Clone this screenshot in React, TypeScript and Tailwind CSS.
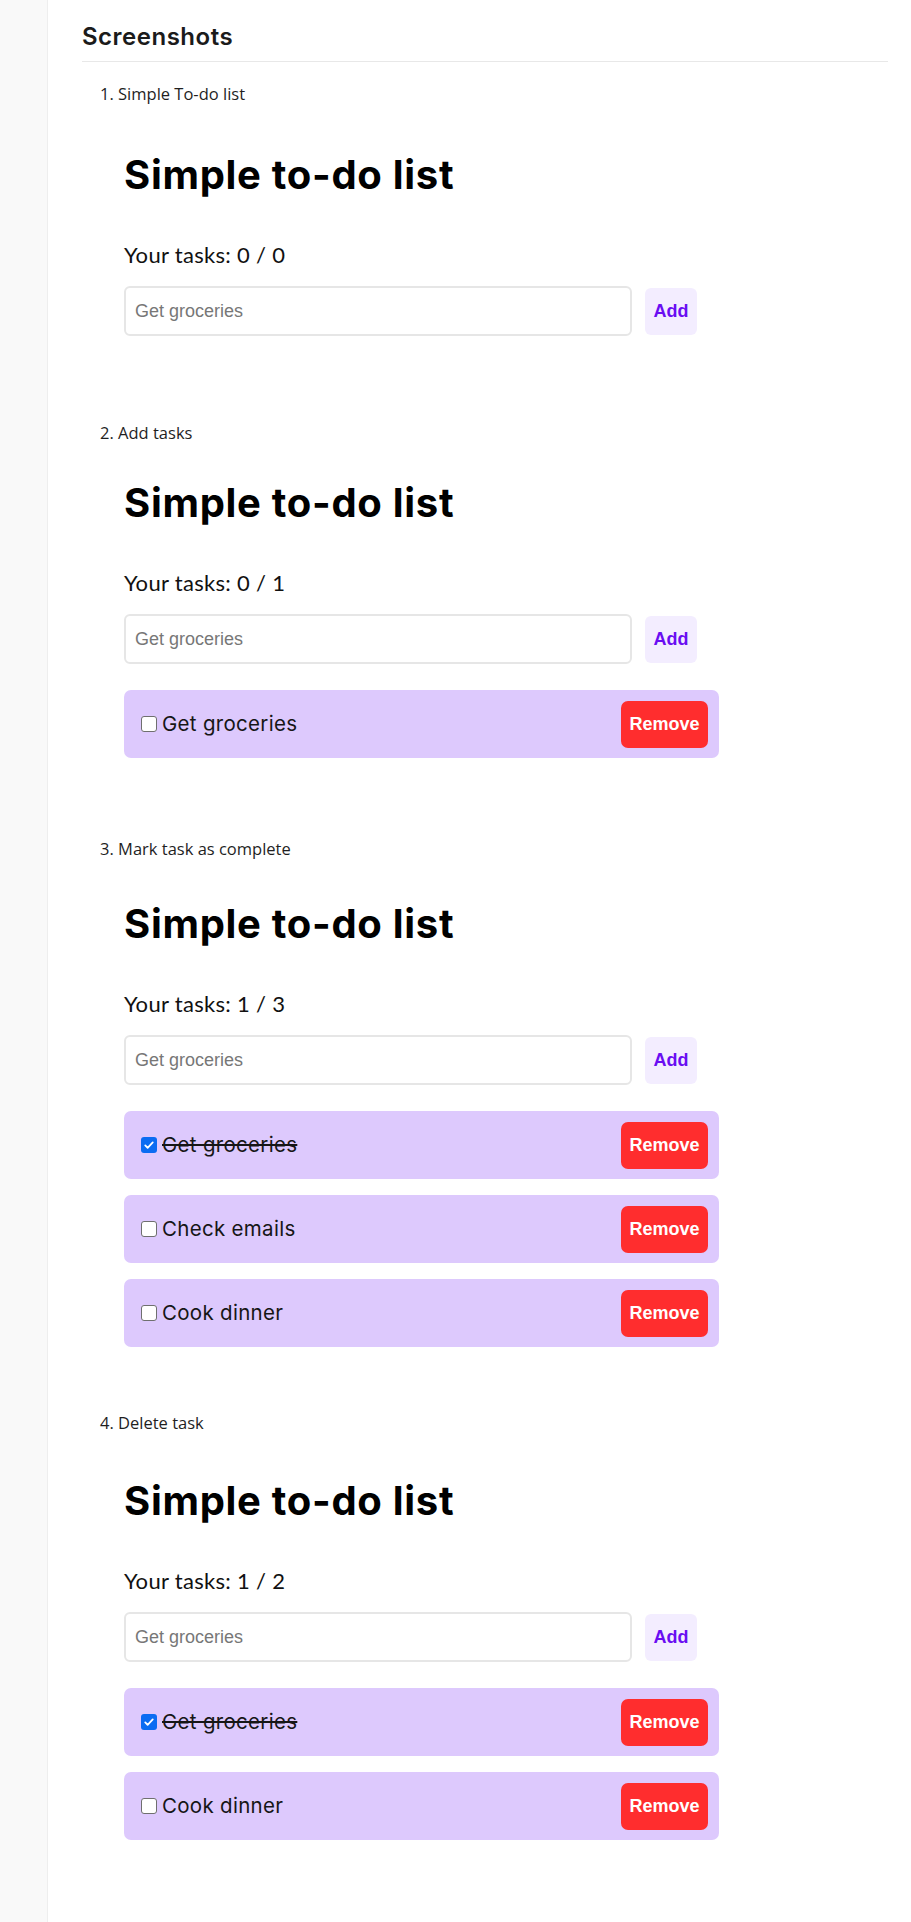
import React from 'react';

interface Task {
  text: string;
  done: boolean;
}

interface Shot {
  label: string;
  done: number;
  tasks: Task[];
  labelGap: string;
  headGap: string;
}

const shots: Shot[] = [
  { label: '1. Simple To-do list', done: 0, tasks: [], labelGap: 'mt-[22px]', headGap: 'mt-[47px]' },
  {
    label: '2. Add tasks',
    done: 0,
    tasks: [{ text: 'Get groceries', done: false }],
    labelGap: 'mt-[87px]',
    headGap: 'mt-[36px]',
  },
  {
    label: '3. Mark task as complete',
    done: 1,
    tasks: [
      { text: 'Get groceries', done: true },
      { text: 'Check emails', done: false },
      { text: 'Cook dinner', done: false },
    ],
    labelGap: 'mt-[81px]',
    headGap: 'mt-[41px]',
  },
  {
    label: '4. Delete task',
    done: 1,
    tasks: [
      { text: 'Get groceries', done: true },
      { text: 'Cook dinner', done: false },
    ],
    labelGap: 'mt-[66px]',
    headGap: 'mt-[44px]',
  },
];

function Checkbox({ checked }: { checked: boolean }) {
  if (checked) {
    return (
      <span className="flex h-4 w-4 shrink-0 items-center justify-center rounded-[3px] bg-[#0b6cf2]">
        <svg viewBox="0 0 16 16" className="h-3 w-3" fill="none">
          <path d="M3 8.5l3.2 3.2L13 4.5" stroke="white" strokeWidth="2.4" strokeLinecap="round" strokeLinejoin="round" />
        </svg>
      </span>
    );
  }
  return <span className="h-4 w-4 shrink-0 rounded-[3px] border-[1.5px] border-[#6f6f6f] bg-white" />;
}

function TodoShot({ shot }: { shot: Shot }) {
  return (
    <div className="ml-[42px] w-[595px]">
      <h1 className={`${shot.headGap} text-[40px] leading-[48px] font-bold tracking-[0.7px] text-black font-['Inter',sans-serif]`}>
        Simple to-do list
      </h1>
      <p className="mt-[43px] text-[22px] leading-[26px] tracking-[0.3px] text-[#111] font-['Lato',sans-serif]">
        Your tasks: {shot.done} / {shot.tasks.length}
      </p>
      <div className="mt-[18px] flex items-center gap-[13px]">
        <input
          readOnly
          placeholder="Get groceries"
          className="h-[50px] w-[508px] rounded-[6px] border-2 border-[#e6e6e6] bg-white px-[9px] text-[18px] font-['Liberation_Sans',Arial,sans-serif] placeholder:text-[#777] outline-none"
        />
        <button className="h-[47px] w-[52px] rounded-[6px] bg-[#f3edff] text-[18px] font-bold text-[#6a0df2] font-['Liberation_Sans',Arial,sans-serif]">
          Add
        </button>
      </div>
      {shot.tasks.length > 0 && (
        <div className="mt-[26px] flex flex-col gap-[16px]">
          {shot.tasks.map((t) => (
            <div
              key={t.text}
              className="flex h-[68px] items-center justify-between rounded-[7px] bg-[#ddc9fd] pl-[17px] pr-[11px]"
            >
              <div className="flex items-center gap-[5px]">
                <Checkbox checked={t.done} />
                <span
                  className={`text-[20.5px] leading-[26px] tracking-[0.3px] text-[#161616] font-['Inter',sans-serif] ${t.done ? 'line-through' : ''}`}
                >
                  {t.text}
                </span>
              </div>
              <button className="h-[47px] w-[87px] rounded-[7px] bg-[#ff2d2e] text-[18px] font-bold text-white font-['Liberation_Sans',Arial,sans-serif]">
                Remove
              </button>
            </div>
          ))}
        </div>
      )}
    </div>
  );
}

export default function App() {
  return (
    <div className="flex min-h-[1922px] bg-white">
      <aside className="w-12 shrink-0 border-r border-[#eeeeee] bg-[#f9f9f9]" />
      <main className="flex-1 pl-[34px] pr-[23px]">
        <h2 className="border-b border-[#e8e8e8] pt-[22px] pb-[9px] text-[24px] leading-[30px] font-semibold tracking-[0.5px] text-[#1b1b1b] font-['Inter',sans-serif]">
          Screenshots
        </h2>
        <ol>
          {shots.map((s) => (
            <li key={s.label}>
              <div className={`${s.labelGap} pl-[18px] text-[16.5px] leading-[20px] text-[#1f1f1f] font-['Open_Sans',sans-serif]`}>
                {s.label}
              </div>
              <TodoShot shot={s} />
            </li>
          ))}
        </ol>
      </main>
    </div>
  );
}
